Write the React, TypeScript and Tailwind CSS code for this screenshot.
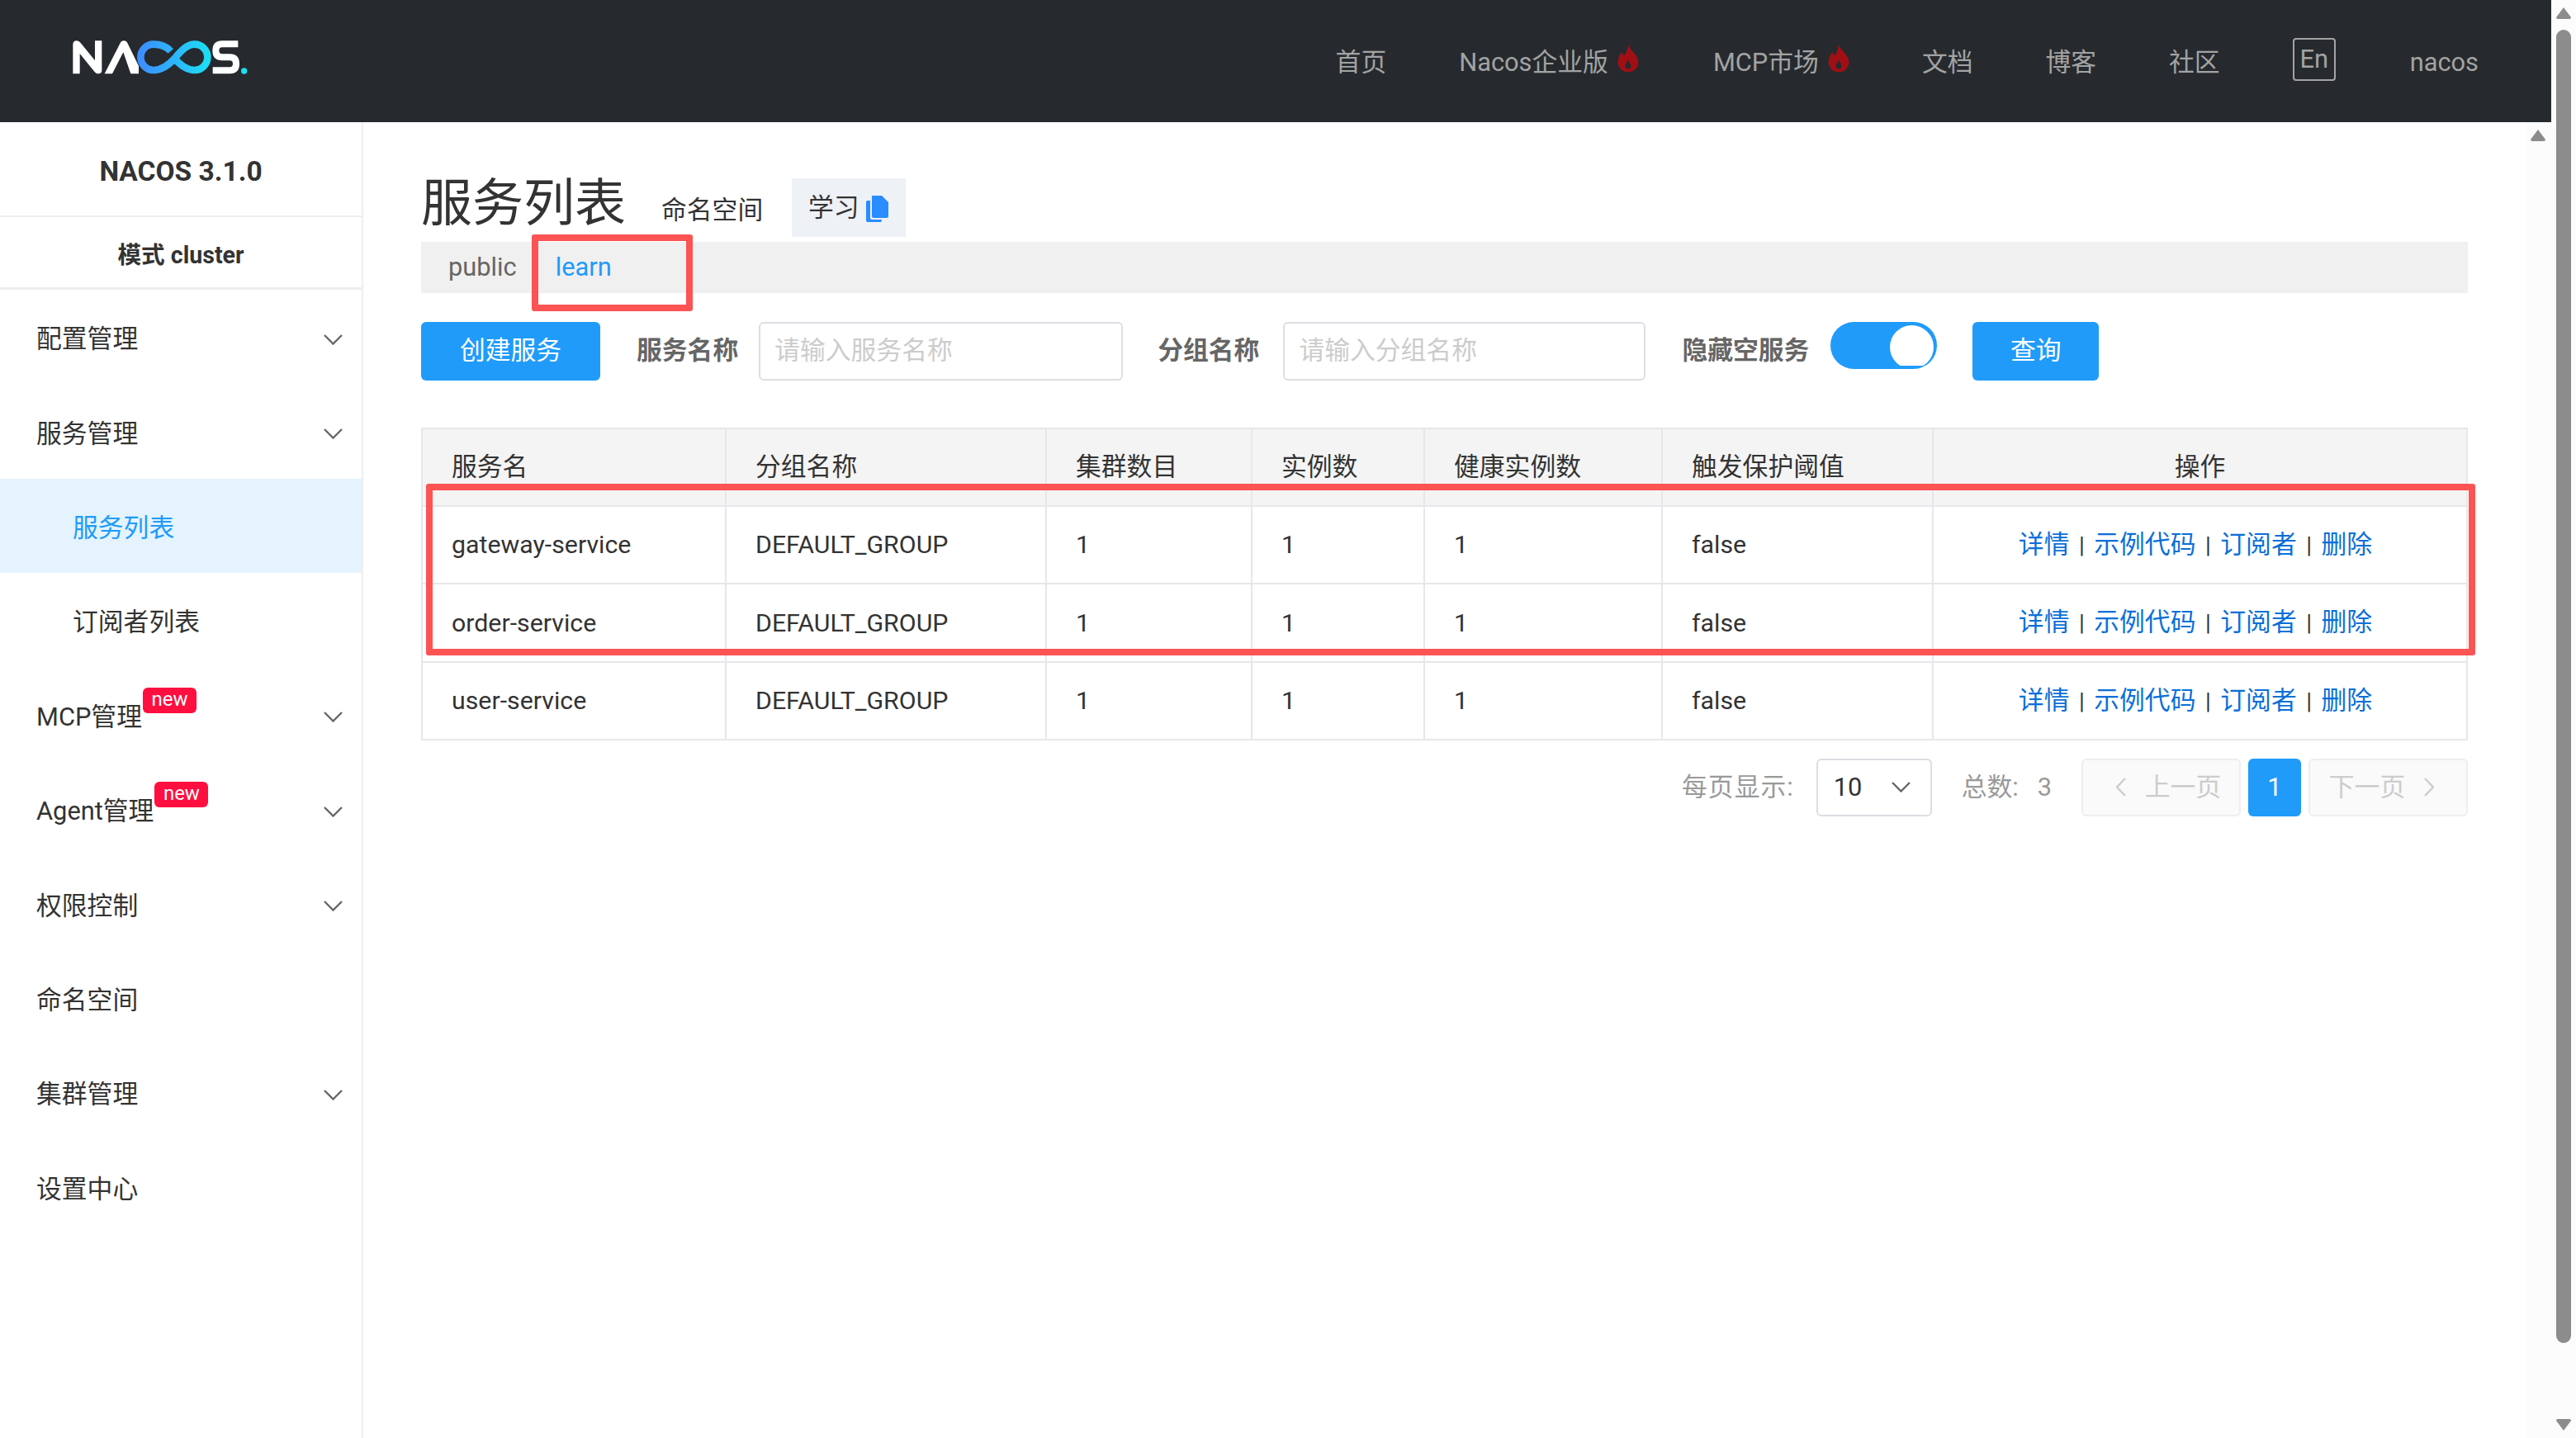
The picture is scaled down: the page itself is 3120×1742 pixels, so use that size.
import { ReactNode } from "react";

const FONT = "font-['Roboto','Noto_Sans_CJK_SC',sans-serif]";

const NAV = [
  { label: "首页" },
  { label: "Nacos企业版", hot: true, extra: "mr-[2px]" },
  { label: "MCP市场", hot: true },
  { label: "文档" },
  { label: "博客" },
  { label: "社区" },
];

const SERVICES = ["gateway-service", "order-service", "user-service"];

const COLUMNS = [
  { title: "服务名", width: "w-[368px]" },
  { title: "分组名称", width: "w-[388px]" },
  { title: "集群数目", width: "w-[249px]" },
  { title: "实例数", width: "w-[209px]" },
  { title: "健康实例数", width: "w-[288px]" },
  { title: "触发保护阈值", width: "w-[328px]" },
];

function Logo() {
  return (
    <svg viewBox="0 0 750 240" className="w-[250px] h-[80px] mb-2">
      <defs>
        <linearGradient id="nacos-inf" x1="290" y1="0" x2="555" y2="0" gradientUnits="userSpaceOnUse">
          <stop offset="0" stopColor="#3d8bff" />
          <stop offset="1" stopColor="#1be0f4" />
        </linearGradient>
      </defs>
      <path
        d="M55 178V72Q55 58 69 58Q77 58 83 66L135 130V58H160V165Q160 178 147 178Q139 178 133 170L80 105V178Z"
        fill="#fff"
      />
      <path d="M170 178L226 68Q231 58 240 58Q249 58 254 68L294 150V178H265L238 100L198 178Z" fill="#fff" />
      <path
        d="M410 96C396 80 378 71 348 71A47 47 0 0 0 348 165C378 165 400 150 425 122C450 92 470 71 497 71A47 47 0 0 1 497 165C470 165 450 150 418 118"
        fill="none"
        stroke="url(#nacos-inf)"
        strokeWidth="26"
      />
      <path
        d="M655 70H597Q574 70 574 94Q574 118 597 118H625Q648 118 648 142Q648 166 625 166H563"
        fill="none"
        stroke="#fff"
        strokeWidth="24"
      />
      <circle cx="677" cy="168" r="11" fill="#1be0f0" />
    </svg>
  );
}

function Flame() {
  return (
    <svg viewBox="0 0 24 31" className="w-[26px] h-[34px] ml-[11px] -mt-[13px]">
      <path
        d="M12 0C13 6 19 9 22 15C25 21 23 27 18 30C15 31.5 9 31.5 6 30C1 27 -1 20 2 14C3 12 4 10 5 9C5.5 11 6.5 12 8 13C10 9 12 5 12 0ZM12 18C10.5 21 8.5 23 9 26C10 28.5 14 28.5 15 26C15.5 23 13.5 21 12 18Z"
        fill="#a00f14"
        fillRule="evenodd"
      />
    </svg>
  );
}

function Chevron({ dir = "down", className = "" }: { dir?: "down" | "left" | "right"; className?: string }) {
  const points = {
    down: "1,1 11.5,11.5 22,1",
    left: "11,1 1,11.5 11,22",
    right: "1,1 11,11.5 1,22",
  }[dir];
  const box = dir === "down" ? "0 0 23 13" : "0 0 12 23";
  return (
    <svg viewBox={box} className={className}>
      <polyline points={points} fill="none" stroke="currentColor" strokeWidth="2.4" />
    </svg>
  );
}

function NewBadge() {
  return (
    <span className="absolute left-full ml-[1px] -top-[18px] w-[65px] h-[31px] rounded-[6px] bg-[#ff0f40] text-white text-[24px] leading-[29px] text-center">
      new
    </span>
  );
}

function MenuItem({ label, arrow, badge }: { label: string; arrow?: boolean; badge?: boolean }) {
  return (
    <div className="h-[114.4px] pt-[6px] pl-[44px] pr-[23px] flex items-center justify-between text-[#333]">
      <span className="relative leading-[36px]">
        {label}
        {badge && <NewBadge />}
      </span>
      {arrow && <Chevron className="w-[23px] h-[13px] text-[#666]" />}
    </div>
  );
}

function Sidebar() {
  return (
    <aside className="w-[440px] shrink-0 border-r-2 border-[#eeeeee] text-[30.8px]">
      <div className="h-[115px] pt-[7px] flex items-center justify-center font-bold text-[33.5px] text-[#333] border-b-2 border-[#eeeeee]">
        NACOS 3.1.0
      </div>
      <div className="h-[88px] pt-[8px] flex items-center justify-center font-bold text-[28.6px] text-[#333] border-b-[3px] border-[#eeeeee]">
        模式 cluster
      </div>
      <MenuItem label="配置管理" arrow />
      <MenuItem label="服务管理" arrow />
      <div className="h-[114.4px] pt-[6px] pl-[88px] flex items-center text-[#209bfa] bg-[#e4f3fe]">服务列表</div>
      <div className="h-[114.4px] pt-[6px] pl-[88px] flex items-center text-[#333]">订阅者列表</div>
      <MenuItem label="MCP管理" arrow badge />
      <MenuItem label="Agent管理" arrow badge />
      <MenuItem label="权限控制" arrow />
      <MenuItem label="命名空间" />
      <MenuItem label="集群管理" arrow />
      <MenuItem label="设置中心" />
    </aside>
  );
}

function Button({ children, className }: { children: ReactNode; className: string }) {
  return (
    <div className={`h-[71px] rounded-[6px] bg-[#209bfa] text-white flex items-center justify-center ${className}`}>
      {children}
    </div>
  );
}

function Toggle() {
  return (
    <div className="ml-[26px] mb-[14px] w-[129px] h-[57px] rounded-full bg-[#209bfa] flex justify-end pt-[4px] pr-[4px]">
      <div className="h-[49px] overflow-hidden">
        <div className="w-[53px] h-[53px] rounded-full bg-white" />
      </div>
    </div>
  );
}

function Actions() {
  const sep = <span className="mx-[11.5px] text-[#333] text-[28px]">|</span>;
  return (
    <div className="text-center pr-[11px] text-[#0a6fd8]">
      详情{sep}示例代码{sep}订阅者{sep}删除
    </div>
  );
}

function ServiceTable() {
  const headCell = "h-[94px] px-[35px] border-2 border-[#e6e7eb] text-left font-normal text-[#333]";
  const cell = "h-[94.3px] px-[35px] border-2 border-[#e6e7eb] text-[#333] text-[30.3px]";
  return (
    <table className="mt-[57px] w-[2479px] table-fixed border-collapse">
      <colgroup>
        {COLUMNS.map((c) => (
          <col key={c.title} className={c.width} />
        ))}
        <col />
      </colgroup>
      <thead className="bg-[#f4f4f4]">
        <tr>
          {COLUMNS.map((c) => (
            <th key={c.title} className={headCell}>
              {c.title}
            </th>
          ))}
          <th className={`${headCell} !text-center`}>操作</th>
        </tr>
      </thead>
      <tbody>
        {SERVICES.map((name) => (
          <tr key={name}>
            <td className={cell}>{name}</td>
            <td className={cell}>DEFAULT_GROUP</td>
            <td className={cell}>1</td>
            <td className={cell}>1</td>
            <td className={cell}>1</td>
            <td className={cell}>false</td>
            <td className={`${cell} !text-[30.8px]`}>
              <Actions />
            </td>
          </tr>
        ))}
      </tbody>
    </table>
  );
}

function Pagination() {
  const pageBtn =
    "w-[193px] h-[70px] rounded-[6px] border-2 border-[#eeeeee] bg-[#fafafa] text-[#cccccc] flex items-center justify-center";
  return (
    <div className="mt-[22px] flex items-center justify-end text-[#999]">
      <span className="tracking-[1px]">每页显示:</span>
      <div className="ml-[27px] w-[140px] h-[70px] rounded-[6px] border-2 border-[#dcdee3] pl-[19px] pr-[24px] flex items-center justify-between text-[#333]">
        <span>10</span>
        <Chevron className="w-[23px] h-[13px] text-[#666]" />
      </div>
      <span className="ml-[36px] whitespace-pre">总数:   3</span>
      <div className={`ml-[36px] pl-[18px] ${pageBtn}`}>
        <Chevron dir="left" className="w-[12px] h-[23px] mr-[23px]" />
        上一页
      </div>
      <div className="ml-[9px] w-[64px] h-[70px] rounded-[6px] bg-[#209bfa] text-white flex items-center justify-center">
        1
      </div>
      <div className={`ml-[9px] pr-[16px] ${pageBtn}`}>
        下一页
        <Chevron dir="right" className="w-[12px] h-[23px] ml-[23px]" />
      </div>
    </div>
  );
}

function ArrowUp({ className = "" }: { className?: string }) {
  return (
    <svg viewBox="0 0 18 14" className={`w-[18px] h-[14px] ${className}`}>
      <path d="M9 0L18 12Q18 14 16 14H2Q0 14 0 12Z" fill="#8c8c8c" />
    </svg>
  );
}

function ArrowDown({ className = "" }: { className?: string }) {
  return (
    <svg viewBox="0 0 18 14" className={`w-[18px] h-[14px] ${className}`}>
      <path d="M9 14L18 2Q18 0 16 0H2Q0 0 0 2Z" fill="#8c8c8c" />
    </svg>
  );
}

export default function App() {
  return (
    <div className={`relative flex w-full h-screen overflow-hidden bg-white text-[30.8px] ${FONT}`}>
      <div className="flex-1 min-w-0 flex flex-col">
        <header className="h-[148px] shrink-0 bg-[#262a2e] flex items-center pl-[70px] pr-[88px]">
          <Logo />
          <nav className="ml-auto pt-[4px] flex items-center gap-[88px] text-[#a3a3a3]">
            {NAV.map((item) => (
              <div key={item.label} className={`flex items-center ${item.extra ?? ""}`}>
                {item.label}
                {item.hot && <Flame />}
              </div>
            ))}
            <div className="w-[52px] h-[52px] -mt-[8px] mr-[2px] rounded-[4px] border-2 border-[#a3a3a3] flex items-center justify-center leading-none">
              En
            </div>
            <span>nacos</span>
          </nav>
        </header>
        <div className="flex-1 min-h-0 flex">
          <Sidebar />
          <main className="flex-1 min-w-0 pl-[70px] pr-[1px] pt-[68px]">
            <div className="w-[2479px]">
              <div className="flex items-center h-[71px]">
                <h1 className="text-[62px] leading-[71px] -mt-[10px] font-normal text-[#333]">服务列表</h1>
                <span className="ml-[43px] mt-[8px] text-[#333]">命名空间</span>
                <div className="ml-[35px] w-[138px] h-[71px] bg-[#eef1f6] pt-[2px] pr-[2px] flex items-center justify-center text-[#333]">
                  学习
                  <svg viewBox="0 0 27 32" className="w-[27px] h-[32px] ml-[8px]">
                    <path d="M7 0H19L27 8V25Q27 27 25 27H9Q7 27 7 25Z" fill="#2a8cff" />
                    <path d="M0 8Q0 6 2 6H5V27Q5 29 7 29H19V30Q19 32 17 32H2Q0 32 0 30Z" fill="#2a8cff" />
                  </svg>
                </div>
              </div>
              <div className="mt-[6px] h-[62px] bg-[#f0f0f0] flex items-center pl-[33px]">
                <span className="text-[#666]">public</span>
                <span className="ml-[47px] text-[#209bfa]">learn</span>
              </div>
              <div className="mt-[35px] flex items-center">
                <Button className="w-[217px]">创建服务</Button>
                <span className="ml-[44px] font-bold text-[#666]">服务名称</span>
                <div className="ml-[25px] w-[441px] h-[71px] rounded-[6px] border-2 border-[#dcdee3] pl-[17px] flex items-center text-[#cccccc]">
                  请输入服务名称
                </div>
                <span className="ml-[42px] font-bold text-[#666]">分组名称</span>
                <div className="ml-[29px] w-[439px] h-[71px] rounded-[6px] border-2 border-[#dcdee3] pl-[17px] flex items-center text-[#cccccc]">
                  请输入分组名称
                </div>
                <span className="ml-[44px] font-bold text-[#666]">隐藏空服务</span>
                <Toggle />
                <Button className="ml-[43px] w-[153px]">查询</Button>
              </div>
              <ServiceTable />
              <Pagination />
            </div>
          </main>
          <div className="w-[30px] shrink-0 bg-[#fcfcfc] pt-[9px] pl-[5px]">
            <ArrowUp />
          </div>
        </div>
      </div>
      <div className="w-[30px] shrink-0 bg-[#fcfcfc] flex flex-col items-center pt-[9px]">
        <ArrowUp />
        <div className="mt-[13px] w-[18px] h-[1591px] rounded-full bg-[#8c8c8c]" />
        <ArrowDown className="mt-[92px]" />
      </div>

      {/* 标注框 */}
      <div className="absolute left-[644px] top-[284px] w-[195px] h-[93px] rounded-[3px] border-[8px] border-[#fc5353]" />
      <div className="absolute left-[516px] top-[586px] w-[2482px] h-[208px] rounded-[3px] border-[8px] border-[#fc5353]" />
    </div>
  );
}
